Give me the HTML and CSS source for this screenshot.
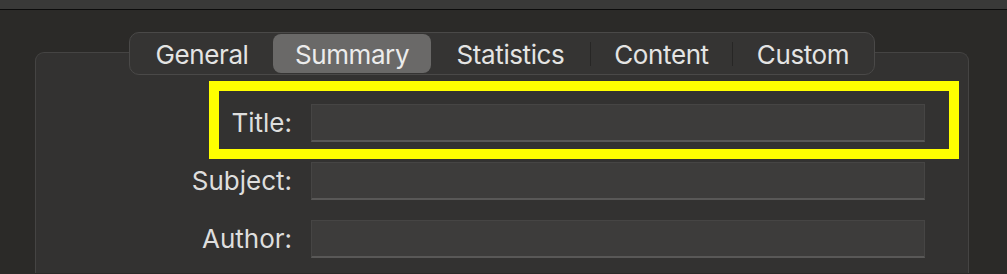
FILE: index.html
```html
<!DOCTYPE html>
<html>
<head>
<meta charset="utf-8">
<link rel="stylesheet" href="styles.css">
</head>
<body>
<div class="topbar"></div>
<div class="main">
  <div class="panel">
    <div class="tabbar">
      <div class="tab t-general">General</div>
      <div class="tab t-summary selected">Summary</div>
      <div class="tab t-statistics">Statistics</div>
      <div class="sep"></div>
      <div class="tab t-content">Content</div>
      <div class="sep"></div>
      <div class="tab t-custom">Custom</div>
    </div>
    <div class="form">
      <label class="label">Title:</label>
      <div class="field"></div>
      <label class="label">Subject:</label>
      <div class="field"></div>
      <label class="label">Author:</label>
      <div class="field"></div>
    </div>
  </div>
</div>
<div class="highlight"></div>
</body>
</html>
```
FILE: styles.css
```css
* { box-sizing: border-box; }
html, body {
  margin: 0;
  padding: 0;
  width: 1007px;
  height: 274px;
  overflow: hidden;
  background: #2b2a28;
  font-family: Inter, "Liberation Sans", Arial, sans-serif;
}
body { position: relative; }
.topbar {
  height: 10px;
  background: #393938;
  border-bottom: 1px solid #0c0c0c;
}
.main {
  padding: 42px 38px 0 35px;
}
.panel {
  height: 221px;
  background: #333231;
  border: 1px solid #454443;
  border-bottom: none;
  border-radius: 9px 9px 0 0;
}
.tabbar {
  display: flex;
  width: 746px;
  height: 43px;
  margin: -21px auto 0;
  padding: 1px;
  background: #353433;
  border: 1px solid #4a4948;
  border-radius: 10px;
}
.tab {
  height: 39px;
  display: flex;
  align-items: center;
  justify-content: center;
  color: #e4e4e3;
  font-size: 26px;
  letter-spacing: -0.4px;
  border-radius: 8px;
  padding-top: 1px;
}
.tab.selected { background: #6a6968; color: #ececec; }
.t-general { width: 142px; }
.t-summary { width: 158px; }
.t-statistics { width: 159px; }
.t-content { width: 141px; }
.t-custom { width: 140px; }
.sep {
  width: 1px;
  height: 24px;
  align-self: center;
  background: #272625;
}
.form {
  display: grid;
  grid-template-columns: 256px 614px;
  column-gap: 19px;
  row-gap: 20px;
  padding-top: 29px;
}
.label {
  height: 38px;
  display: flex;
  align-items: center;
  justify-content: flex-end;
  color: #dededd;
  font-size: 26px;
  letter-spacing: 0;
  padding-bottom: 2px;
}
.field {
  height: 38px;
  background: #3d3c3b;
  border: 1px solid #464544;
  border-bottom: 2px solid #595857;
}
.highlight {
  position: absolute;
  left: 209px;
  top: 81px;
  width: 750px;
  height: 78px;
  border: 10px solid #ffff00;
}
```
